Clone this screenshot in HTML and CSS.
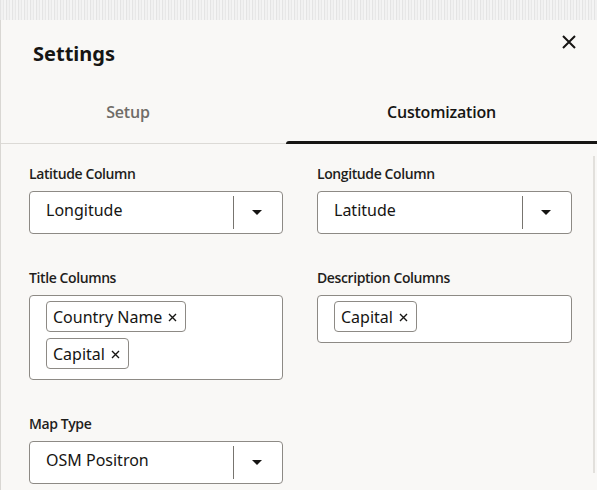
FILE: index.html
```html
<!DOCTYPE html>
<html lang="en">
<head>
<meta charset="utf-8">
<title>Settings</title>
<link rel="stylesheet" href="styles.css">
</head>
<body>
<div class="strip"></div>
<div class="dialog">
  <div class="header">
    <h1 class="title">Settings</h1>
    <button class="close" aria-label="Close">
      <svg width="14" height="14" viewBox="0 0 14 14"><path d="M1 1L13 13M13 1L1 13" stroke="#161513" stroke-width="2" fill="none"/></svg>
    </button>
  </div>
  <div class="tabs">
    <div class="tab">Setup</div>
    <div class="tab active">Customization</div>
  </div>
  <div class="content">
    <div class="scrollbar"></div>
    <div class="grid">
      <div class="field">
        <div class="label">Latitude Column</div>
        <div class="select">
          <span class="value">Longitude</span>
          <span class="divider"></span>
          <span class="arrow"><svg width="10" height="5" viewBox="0 0 10 5"><path d="M0 0H10L5 5Z" fill="#161513"/></svg></span>
        </div>
      </div>
      <div class="field">
        <div class="label">Longitude Column</div>
        <div class="select">
          <span class="value">Latitude</span>
          <span class="divider"></span>
          <span class="arrow"><svg width="10" height="5" viewBox="0 0 10 5"><path d="M0 0H10L5 5Z" fill="#161513"/></svg></span>
        </div>
      </div>
      <div class="field">
        <div class="label">Title Columns</div>
        <div class="multi">
          <span class="chip">Country Name<svg class="x" width="9" height="9" viewBox="0 0 9 9"><path d="M1 1L8 8M8 1L1 8" stroke="#161513" stroke-width="1.4" fill="none"/></svg></span>
          <span class="chip">Capital<svg class="x" width="9" height="9" viewBox="0 0 9 9"><path d="M1 1L8 8M8 1L1 8" stroke="#161513" stroke-width="1.4" fill="none"/></svg></span>
        </div>
      </div>
      <div class="field">
        <div class="label">Description Columns</div>
        <div class="multi">
          <span class="chip">Capital<svg class="x" width="9" height="9" viewBox="0 0 9 9"><path d="M1 1L8 8M8 1L1 8" stroke="#161513" stroke-width="1.4" fill="none"/></svg></span>
        </div>
      </div>
      <div class="field">
        <div class="label">Map Type</div>
        <div class="select">
          <span class="value">OSM Positron</span>
          <span class="divider"></span>
          <span class="arrow"><svg width="10" height="5" viewBox="0 0 10 5"><path d="M0 0H10L5 5Z" fill="#161513"/></svg></span>
        </div>
      </div>
    </div>
  </div>
</div>
</body>
</html>
```
FILE: styles.css
```css
html, body {
  margin: 0;
  padding: 0;
}
body {
  width: 597px;
  height: 490px;
  overflow: hidden;
  background: #ebebeb;
  font-family: "Noto Sans", "Open Sans", sans-serif;
  color: #161513;
}
.strip {
  height: 20px;
  background:
    repeating-linear-gradient(90deg, #e4e4e4 0 1px, #f1f1f1 1px 3px, #e8e8e8 3px 4px, #f4f4f4 4px 6px);
}
.dialog {
  position: relative;
  height: 470px;
  background: #f9f8f6;
  border-left: 1px solid #d9d7d3;
  box-sizing: border-box;
}
.header {
  display: flex;
  justify-content: space-between;
  align-items: flex-start;
  height: 70px;
  padding: 0 21px 0 32px;
  box-sizing: border-box;
}
.title {
  margin: 22px 0 0 0;
  font-size: 20px;
  line-height: 24px;
  font-weight: 700;
}
.close {
  margin-top: 15px;
  padding: 0;
  border: 0;
  background: none;
  width: 14px;
  height: 14px;
  display: flex;
}
.tabs {
  display: grid;
  grid-template-columns: 254px 1fr;
  height: 54px;
  box-sizing: border-box;
  border-bottom: 1px solid #dcdad6;
}
.tab {
  position: relative;
  text-align: center;
  padding-top: 10px;
  font-family: "Open Sans", "Noto Sans", sans-serif;
  font-size: 16px;
  line-height: 24px;
  font-weight: 600;
  letter-spacing: -0.2px;
  color: #6f6c67;
}
.tab.active {
  margin-left: 31px;
  color: #161513;
}
.tab.active::after {
  content: "";
  position: absolute;
  left: 0;
  right: 0;
  bottom: -1px;
  height: 3px;
  background: #161513;
  border-radius: 3px 0 0 0;
}
.content {
  position: relative;
  padding: 20px 0 0 28px;
}
.scrollbar {
  position: absolute;
  left: 592px;
  top: 12px;
  width: 2px;
  height: 317px;
  background: #e2e0dc;
}
.grid {
  display: grid;
  grid-template-columns: 254px 255px;
  column-gap: 34px;
  row-gap: 34px;
  align-items: start;
}
.label {
  font-family: "Open Sans", "Noto Sans", sans-serif;
  font-size: 14px;
  line-height: 20px;
  font-weight: 600;
  letter-spacing: -0.4px;
  color: #1f1e1c;
  margin-bottom: 7px;
}
.select {
  display: flex;
  align-items: center;
  height: 43px;
  box-sizing: border-box;
  border: 1px solid #8d8a85;
  border-radius: 4px;
  background: #fff;
}
.value {
  flex: 1;
  padding-left: 16px;
  padding-bottom: 5px;
  font-size: 16px;
  line-height: 24px;
}
.divider {
  width: 1px;
  height: 33px;
  background: #77746f;
}
.arrow {
  width: 46px;
  display: flex;
  justify-content: center;
  padding-right: 2px;
}
.multi {
  display: flex;
  flex-wrap: wrap;
  gap: 6px;
  align-items: flex-start;
  box-sizing: border-box;
  border: 1px solid #8d8a85;
  border-radius: 4px;
  background: #fff;
  padding: 5px 8px 10px 16px;
}
.chip {
  display: inline-flex;
  align-items: center;
  gap: 6px;
  height: 31px;
  box-sizing: border-box;
  padding: 0 8px 0 6px;
  border: 1px solid #8d8a85;
  border-radius: 4px;
  font-size: 16px;
  line-height: 24px;
  color: #161513;
}
.x {
  margin-top: 2px;
}
```
